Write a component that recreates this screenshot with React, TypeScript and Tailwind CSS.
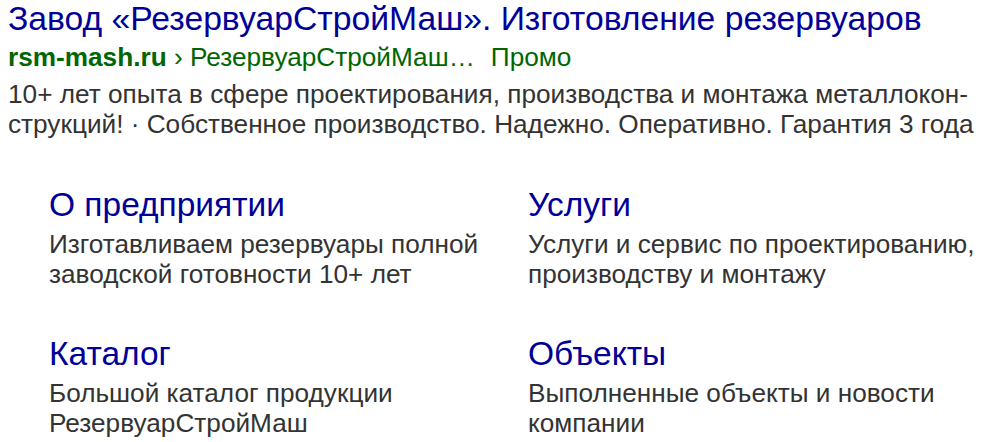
const SITELINKS = [
  { title: 'О предприятии', text: ['Изготавливаем резервуары полной', 'заводской готовности 10+ лет'] },
  { title: 'Услуги', text: ['Услуги и сервис по проектированию,', 'производству и монтажу'] },
  { title: 'Каталог', text: ['Большой каталог продукции', 'РезервуарСтройМаш'] },
  { title: 'Объекты', text: ['Выполненные объекты и новости', 'компании'] },
]

export default function App() {
  return (
    <div className="w-[983px] h-[442px] bg-white overflow-hidden font-['Liberation_Sans',Arial,sans-serif]">
      <div className="pl-2">
        <a className="block text-[33.7px] leading-[37px] text-[#000099] whitespace-nowrap">
          Завод «РезервуарСтройМаш». Изготовление резервуаров
        </a>
        <div className="text-[26.2px] leading-[40px] text-[#006600] whitespace-nowrap">
          <span className="font-bold">rsm-mash.ru</span>
          <span> › РезервуарСтройМаш…</span>
          <span className="ml-[16px]">Промо</span>
        </div>
        <p className="mt-[2px] text-[26.2px] leading-[30px] text-[#333333] whitespace-nowrap">
          10+ лет опыта в сфере проектирования, производства и монтажа металлокон-
          <br />
          струкций! · Собственное производство. Надежно. Оперативно. Гарантия 3 года
        </p>
      </div>
      <div className="grid grid-cols-[479px_1fr] pl-[49px] pt-[46px] gap-y-[45px]">
        {SITELINKS.map(s => (
          <div key={s.title}>
            <a className="block mb-[4px] text-[33.5px] leading-[40px] text-[#000099]">{s.title}</a>
            <div className="text-[26.2px] leading-[30px] text-[#333333] whitespace-nowrap">
              {s.text.map(t => (
                <div key={t}>{t}</div>
              ))}
            </div>
          </div>
        ))}
      </div>
    </div>
  )
}
